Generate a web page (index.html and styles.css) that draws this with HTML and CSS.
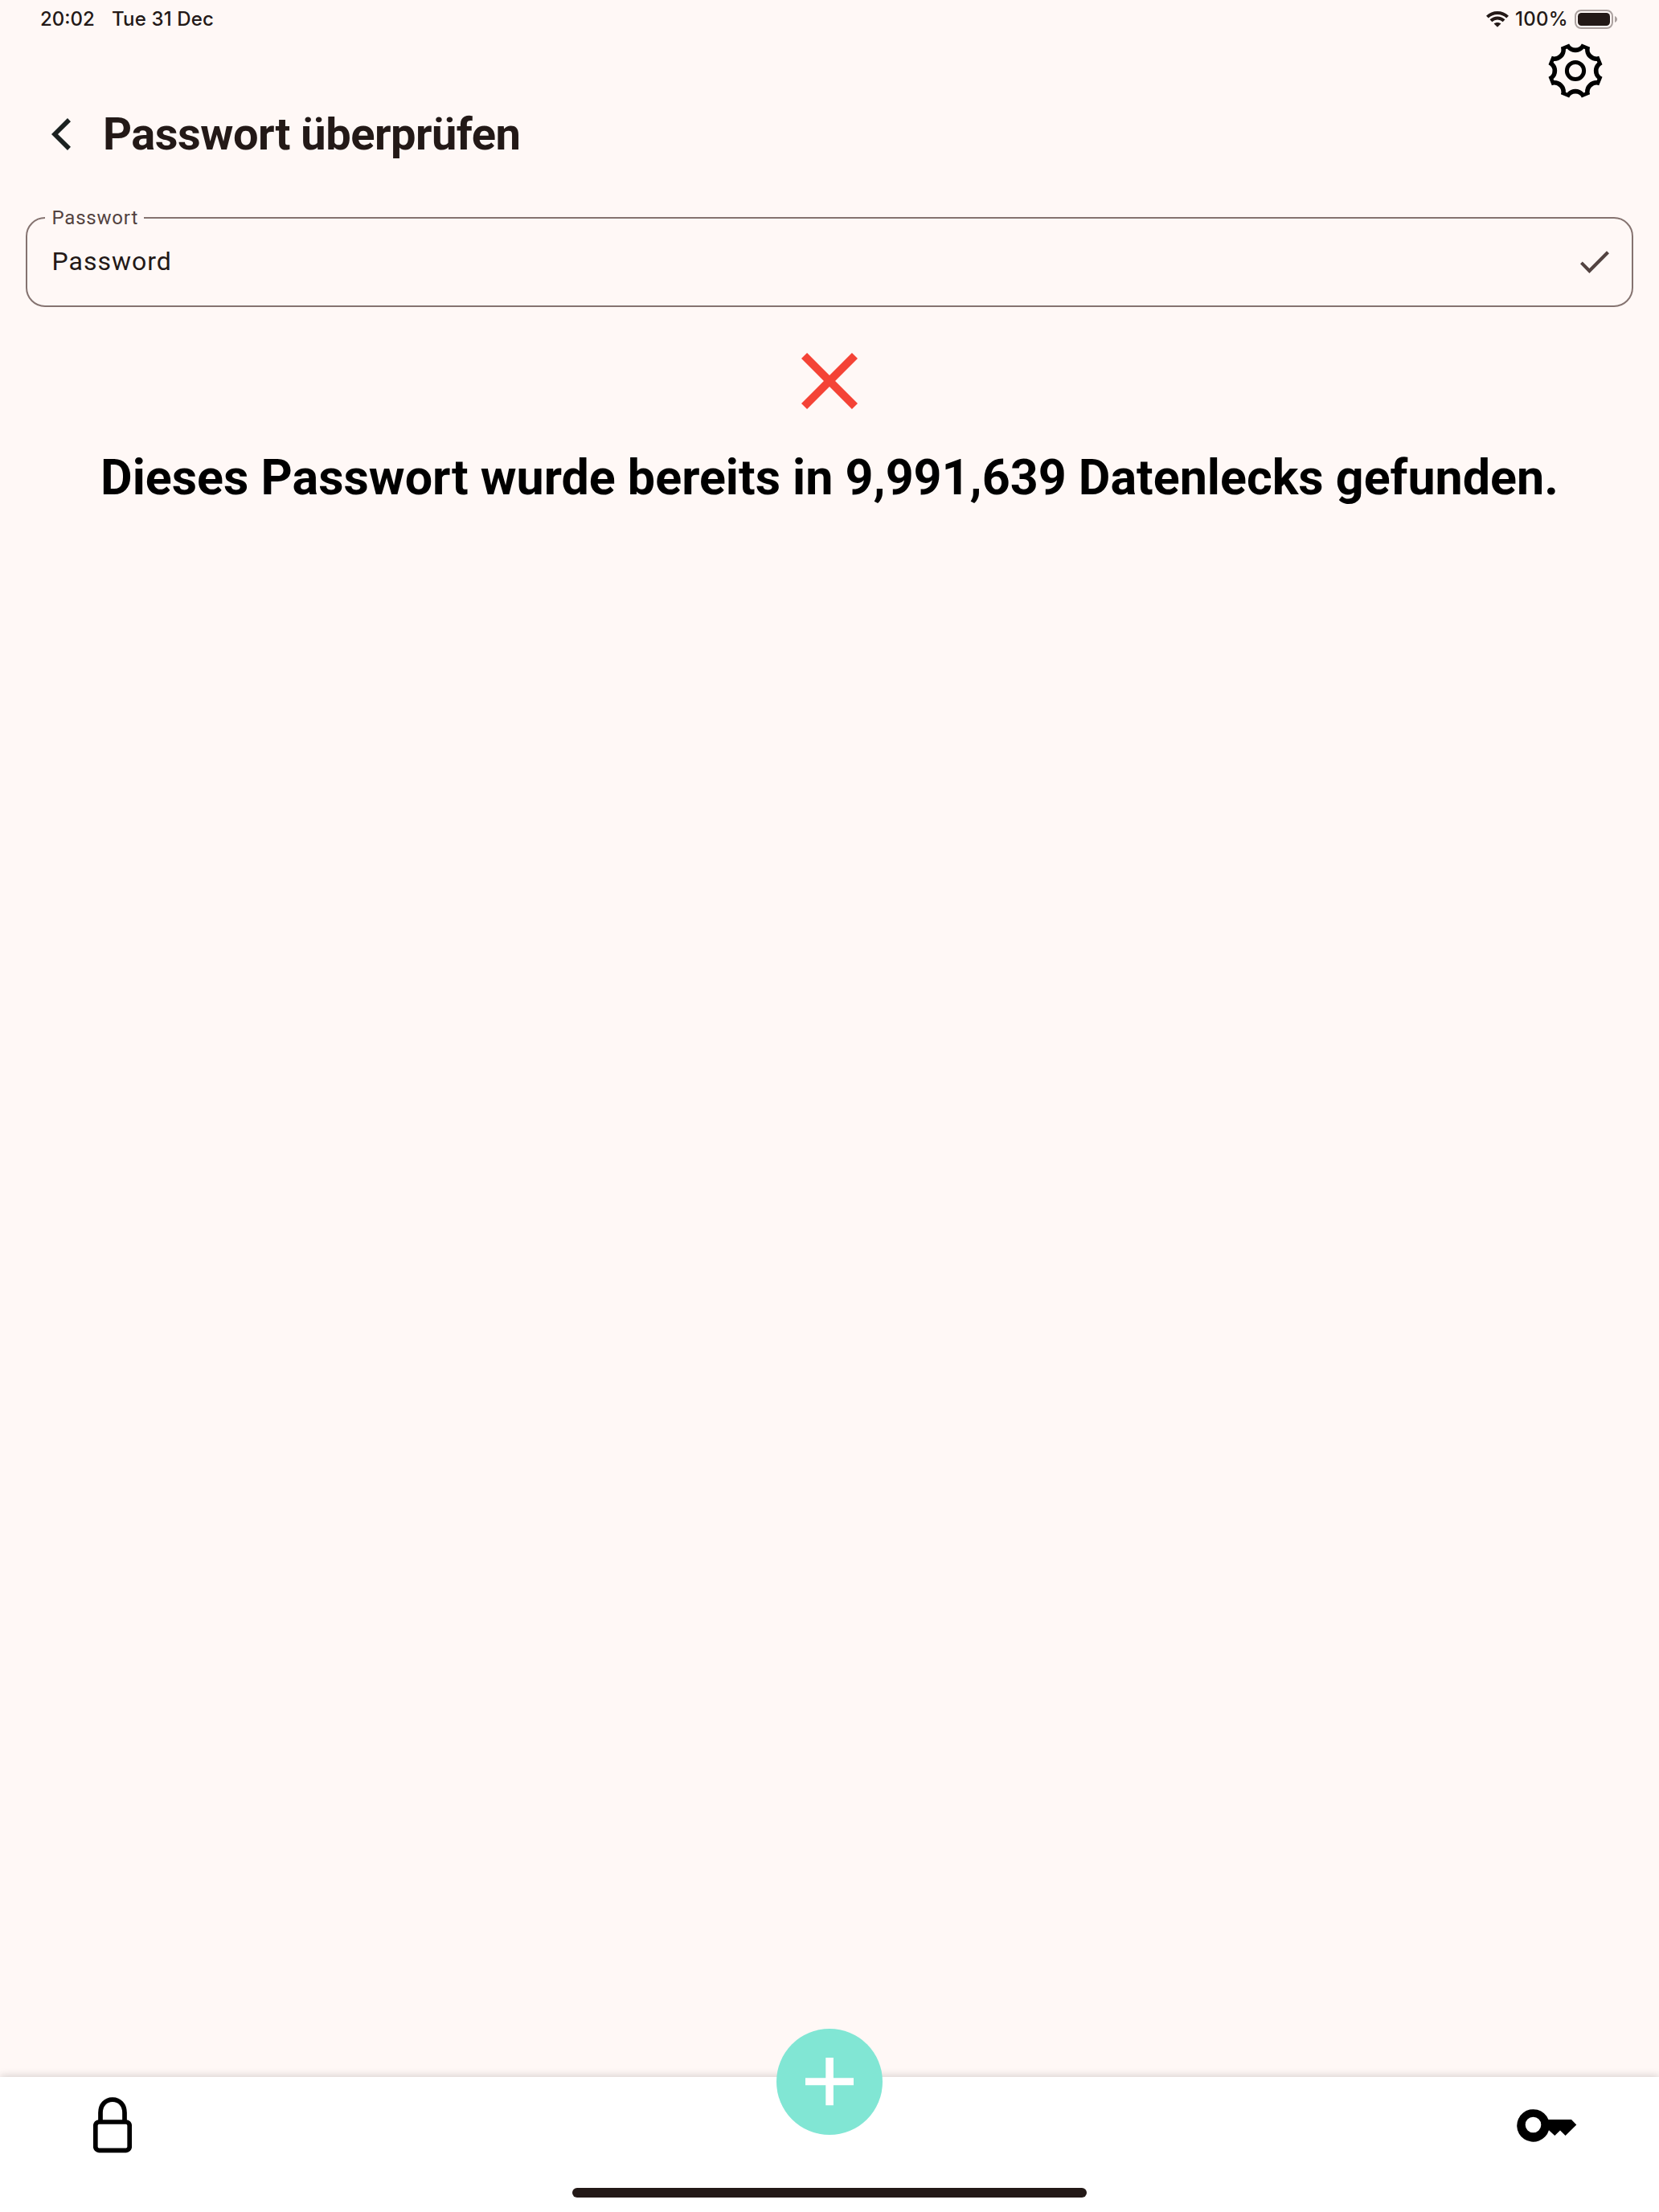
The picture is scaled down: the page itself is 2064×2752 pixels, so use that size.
FILE: index.html
```html
<!DOCTYPE html>
<html lang="de">
<head>
<meta charset="utf-8">
<title>Passwort überprüfen</title>
<link rel="stylesheet" href="styles.css">
</head>
<body>
<div class="app">
  <div class="status">
    <span class="time">20:02</span>
    <span class="date">Tue 31 Dec</span>
    <svg class="wifi" width="28" height="20" viewBox="0 0 28 20">
      <path d="M1.4 7.2C8.4 .3 19.6 .3 26.6 7.2" />
      <path d="M5.9 11.7C10.6 7.3 17.4 7.3 22.1 11.7" />
      <path class="dot" d="M14 19.8L9.6 15.5C12 13.5 16 13.5 18.4 15.5Z" />
    </svg>
    <span class="charge">100%</span>
    <svg class="battery" width="54" height="24" viewBox="0 0 54 24">
      <rect class="shell" x="1" y="1" width="46" height="22" rx="7" />
      <rect x="4" y="4" width="40" height="16" rx="4.5" />
      <path class="nub" d="M50 8c4 1.500 4 6.500 0 8z" />
    </svg>
  </div>
  <div class="tools">
    <svg width="70" height="70" viewBox="-35 -35 70 70">
      <path fill-rule="evenodd" d="M-7.860-33.490A8.700 8.700 0 0 0 7.860-33.490L18.130-29.240A8.700 8.700 0 0 0 29.240-18.130L33.490-7.860A8.700 8.700 0 0 0 33.490 7.860L29.240 18.130A8.700 8.700 0 0 0 18.130 29.240L7.860 33.490A8.700 8.700 0 0 0-7.860 33.490L-18.130 29.240A8.700 8.700 0 0 0-29.240 18.130L-33.490 7.860A8.700 8.700 0 0 0-33.490-7.860L-29.240-18.130A8.700 8.700 0 0 0-18.130-29.240Z
      M-10.360-27.410A14 14 0 0 0 10.360-27.410L12.060-26.700A14 14 0 0 0 26.700-12.060L27.410-10.360A14 14 0 0 0 27.410 10.360L26.700 12.060A14 14 0 0 0 12.060 26.700L10.360 27.410A14 14 0 0 0-10.360 27.410L-12.060 26.700A14 14 0 0 0-26.700 12.060L-27.410 10.360A14 14 0 0 0-27.410-10.360L-26.700-12.060A14 14 0 0 0-12.060-26.700Z" />
      <circle class="hub" r="10.600" />
    </svg>
  </div>
  <header class="header">
    <svg class="back" width="24" height="40" viewBox="0 0 24 40"><path d="M20 0L24 4.200L8 20L24 35.800L20 40L0 20Z" /></svg>
    <h1>Passwort überprüfen</h1>
  </header>
  <fieldset class="field">
    <legend>Passwort</legend>
    <div class="entry">
      <span class="value">Password</span>
      <svg class="check" width="36" height="28" viewBox="0 0 36 28"><path d="M0 16.300L2.800 13.400L11.400 22L33 .3L36 3.300L11.400 28Z" /></svg>
    </div>
  </fieldset>
  <main class="result">
    <svg class="cross" width="120" height="120" viewBox="0 0 24 24"><path d="M19 6.410L17.590 5 12 10.590 6.410 5 5 6.410 10.590 12 5 17.590 6.410 19 12 13.410 17.590 19 19 17.590 13.410 12z" /></svg>
    <p>Dieses Passwort wurde bereits in 9,991,639 Datenlecks gefunden.</p>
  </main>
  <nav class="nav">
    <svg class="lock" width="48" height="70" viewBox="0 0 48 70">
      <rect x="2.800" y="31" width="42.400" height="35.300" rx="4.500" />
      <path d="M9 30V19.500C9 10 15 3.100 24 3.100S39 10 39 19.500V30" />
    </svg>
    <svg class="key" width="76" height="42" viewBox="0 0 76 42">
      <path fill-rule="evenodd" d="M39.400 14H68L74.300 20.500L60.600 34L54 27.500L47.300 34L40 27.200A20.300 20.300 0 1 1 39.400 14ZM20.500 10.700A9.800 9.800 0 1 0 20.500 30.300A9.800 9.800 0 1 0 20.500 10.700Z" />
    </svg>
    <div class="fab"><svg width="60" height="60" viewBox="0 0 60 60"><path d="M25.300 0h9.600v25.200H60v9H34.900V59.300h-9.600V34.200H0v-9h25.300z" /></svg></div>
    <div class="home"></div>
  </nav>
</div>
</body>
</html>
```
FILE: styles.css
```css
* { box-sizing: border-box; }
body {
  margin: 0;
  background: #fff8f6;
  color: #231917;
  font-family: Roboto, sans-serif;
}
svg { display: block; flex: none; }
.app {
  width: 2064px;
  height: 2752px;
  display: flex;
  flex-direction: column;
  overflow: hidden;
}
.status {
  height: 48px;
  padding: 0 51px 0 50px;
  display: flex;
  align-items: center;
  font: 500 24px/48px Inter, sans-serif;
  fill: #231917;
  white-space: nowrap;
}
.time { width: 89px; }
.date { letter-spacing: 0.15px; }
.wifi { margin-left: auto; }
.wifi path { fill: none; stroke: #231917; stroke-width: 4; }
.wifi .dot { fill: #231917; stroke: none; }
.charge { width: 74px; margin-left: 8px; letter-spacing: 0.3px; }
.battery .shell { fill: none; stroke: #aba19f; stroke-width: 2; }
.battery .nub { fill: #aba19f; }
.tools { height: 76px; padding: 5px 69px 0 0; display: flex; justify-content: flex-end; }
.hub { fill: none; stroke: #000; stroke-width: 5; }
.header { height: 86px; padding-left: 64px; display: flex; align-items: center; }
.back { fill: #1b2120; }
h1 { margin: 0 0 0 40px; font-size: 56px; line-height: 64px; font-weight: 700; letter-spacing: -0.5px; }
.field {
  height: 126px;
  margin: 46px 32px 0;
  padding: 0 28px 0 22px;
  border: 2px solid #857370;
  border-radius: 24px;
}
legend {
  height: 30px;
  padding: 0 7px 0 8.5px;
  font-size: 24px;
  line-height: 30px;
  letter-spacing: 0.8px;
  color: #534341;
}
.entry { display: flex; justify-content: space-between; align-items: center; height: 80px; padding-left: 8.5px; }
.value { padding-bottom: 2px; font-size: 32px; line-height: 40px; letter-spacing: 1px; }
.check { fill: #534341; }
.result { flex: 1; padding-top: 32px; display: flex; flex-direction: column; align-items: center; }
.cross { fill: #f44336; }
.result p {
  margin: 24px 0 0;
  color: #000;
  font-size: 61px;
  line-height: 72px;
  font-weight: 700;
  white-space: nowrap;
}
.nav {
  position: relative;
  height: 168px;
  padding: 25px 101px 0 116px;
  display: flex;
  justify-content: space-between;
  align-items: flex-start;
  background: #fff;
  box-shadow: 0 -1px 10px rgba(0, 0, 0, 0.18);
}
.lock { fill: none; stroke: #000; stroke-width: 5.7; }
.key { margin-top: 14px; }
.fab {
  position: absolute;
  left: 966px;
  top: -60px;
  width: 132px;
  height: 132px;
  padding: 36px;
  border-radius: 50%;
  background: #81e6d4;
  fill: #fff;
}
.home {
  position: absolute;
  left: 712px;
  bottom: 18px;
  width: 640px;
  height: 12px;
  border-radius: 6px;
  background: #231917;
}
```
